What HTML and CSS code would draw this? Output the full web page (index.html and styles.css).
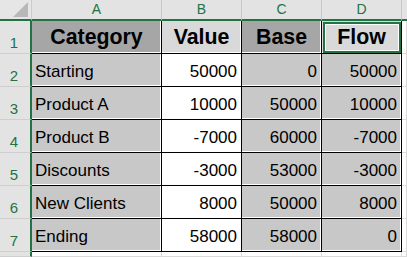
FILE: index.html
```html
<!DOCTYPE html>
<html>
<head>
<meta charset="utf-8">
<link rel="stylesheet" href="styles.css">
</head>
<body>
<div class="sheet">
  <div class="corner"><span class="tri"></span></div>
  <div class="colhead">A</div>
  <div class="colhead">B</div>
  <div class="colhead">C</div>
  <div class="colhead">D</div>
  <div class="colhead rest"></div>

  <div class="rowhead">1</div>
  <div class="cell hdr dark">Category</div>
  <div class="cell hdr light">Value</div>
  <div class="cell hdr dark">Base</div>
  <div class="cell hdr light active">Flow</div>
  <div class="blank"></div>

  <div class="rowhead">2</div>
  <div class="cell txt gray">Starting</div>
  <div class="cell num white">50000</div>
  <div class="cell num gray">0</div>
  <div class="cell num gray">50000</div>
  <div class="blank"></div>

  <div class="rowhead">3</div>
  <div class="cell txt gray">Product A</div>
  <div class="cell num white">10000</div>
  <div class="cell num gray">50000</div>
  <div class="cell num gray">10000</div>
  <div class="blank"></div>

  <div class="rowhead">4</div>
  <div class="cell txt gray">Product B</div>
  <div class="cell num white">-7000</div>
  <div class="cell num gray">60000</div>
  <div class="cell num gray">-7000</div>
  <div class="blank"></div>

  <div class="rowhead">5</div>
  <div class="cell txt gray">Discounts</div>
  <div class="cell num white">-3000</div>
  <div class="cell num gray">53000</div>
  <div class="cell num gray">-3000</div>
  <div class="blank"></div>

  <div class="rowhead">6</div>
  <div class="cell txt gray">New Clients</div>
  <div class="cell num white">8000</div>
  <div class="cell num gray">50000</div>
  <div class="cell num gray">8000</div>
  <div class="blank"></div>

  <div class="rowhead">7</div>
  <div class="cell txt gray">Ending</div>
  <div class="cell num white">58000</div>
  <div class="cell num gray">58000</div>
  <div class="cell num gray">0</div>
  <div class="blank"></div>

  <div class="rowhead"></div>
  <div class="blank"></div>
  <div class="blank"></div>
  <div class="blank"></div>
  <div class="blank"></div>
  <div class="blank"></div>
</div>
</body>
</html>
```

FILE: styles.css
```css
html, body {
  margin: 0;
  padding: 0;
  background: #ffffff;
}
body {
  width: 407px;
  height: 257px;
  overflow: hidden;
  font-family: "Liberation Sans", Arial, sans-serif;
}
.sheet {
  display: grid;
  grid-template-columns: 32px 130px 80px 80px 80px 1fr;
  grid-template-rows: 21px repeat(7, 33px) 5px;
  width: 407px;
}
.sheet > div {
  box-sizing: border-box;
}
.corner {
  background: #e6e6e6;
  border-right: 1px solid #cccccc;
  border-bottom: 2px solid #217346;
  position: relative;
}
.tri {
  position: absolute;
  right: 3px;
  bottom: 2px;
  width: 0;
  height: 0;
  border-left: 15px solid transparent;
  border-bottom: 15px solid #b8b8b8;
}
.colhead {
  background: #e3e3e3;
  border-right: 1px solid #c8c8c8;
  border-bottom: 2px solid #217346;
  color: #217346;
  font-size: 14px;
  line-height: 19px;
  text-align: center;
}
.colhead.rest {
  border-right: none;
}
.rowhead {
  background: #e3e3e3;
  border-right: 2px solid #217346;
  border-bottom: 1px solid #cfcfcf;
  color: #217346;
  font-size: 15px;
  line-height: 15px;
  display: flex;
  align-items: flex-end;
  justify-content: center;
  padding-bottom: 3px;
  padding-right: 2px;
}
.cell {
  border-right: 1px solid #000000;
  border-bottom: 1px solid #000000;
  box-shadow: inset -1px -1px 0 #ffffff;
  display: flex;
  align-items: center;
  color: #000000;
  line-height: 1;
}
.hdr {
  font-size: 21.33px;
  font-weight: bold;
  justify-content: center;
  padding-top: 1px;
}
.txt {
  font-size: 17px;
  padding-left: 3px;
  padding-top: 2px;
}
.num {
  font-size: 17px;
  justify-content: flex-end;
  padding-right: 4px;
  padding-top: 2px;
}
.dark { background: #a6a6a6; }
.light { background: #d9d9d9; }
.gray { background: #c8c8c8; }
.white { background: #ffffff; }
.active {
  position: relative;
}
.active::after {
  content: "";
  position: absolute;
  left: 1px;
  top: 1px;
  right: 0;
  bottom: 0;
  border: 2px solid #217346;
  box-shadow: inset 0 0 0 1px #ffffff;
  pointer-events: none;
}
.blank {
  background: #ffffff;
  border-right: 1px solid #dadada;
  border-bottom: 1px solid #dadada;
}
```
